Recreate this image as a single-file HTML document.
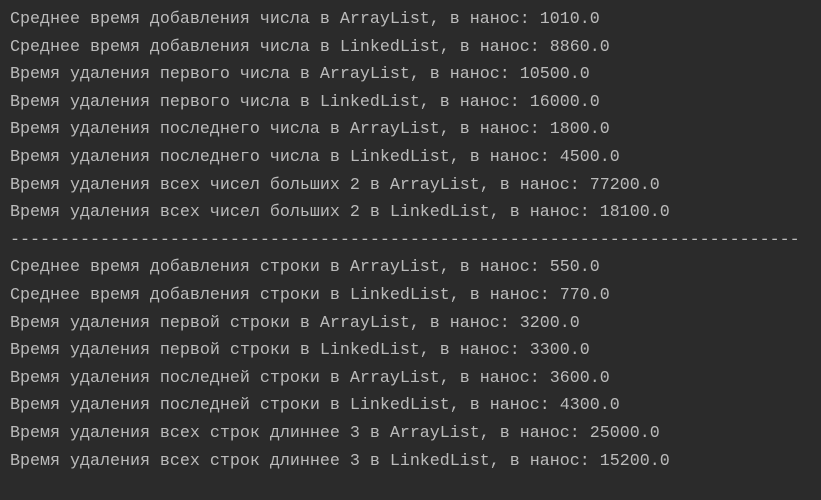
<!DOCTYPE html>
<html><head><meta charset="utf-8"><style>
html,body{margin:0;padding:0;background:#2b2b2b;width:821px;height:500px;overflow:hidden}
pre{margin:0;position:absolute;left:10px;top:6px;font-family:"Liberation Mono",monospace;font-size:16.67px;line-height:27.6px;color:#bbbbbb}
</style></head><body><pre>Среднее время добавления числа в ArrayList, в нанос: 1010.0
Среднее время добавления числа в LinkedList, в нанос: 8860.0
Время удаления первого числа в ArrayList, в нанос: 10500.0
Время удаления первого числа в LinkedList, в нанос: 16000.0
Время удаления последнего числа в ArrayList, в нанос: 1800.0
Время удаления последнего числа в LinkedList, в нанос: 4500.0
Время удаления всех чисел больших 2 в ArrayList, в нанос: 77200.0
Время удаления всех чисел больших 2 в LinkedList, в нанос: 18100.0
-------------------------------------------------------------------------------
Среднее время добавления строки в ArrayList, в нанос: 550.0
Среднее время добавления строки в LinkedList, в нанос: 770.0
Время удаления первой строки в ArrayList, в нанос: 3200.0
Время удаления первой строки в LinkedList, в нанос: 3300.0
Время удаления последней строки в ArrayList, в нанос: 3600.0
Время удаления последней строки в LinkedList, в нанос: 4300.0
Время удаления всех строк длиннее 3 в ArrayList, в нанос: 25000.0
Время удаления всех строк длиннее 3 в LinkedList, в нанос: 15200.0</pre></body></html>
